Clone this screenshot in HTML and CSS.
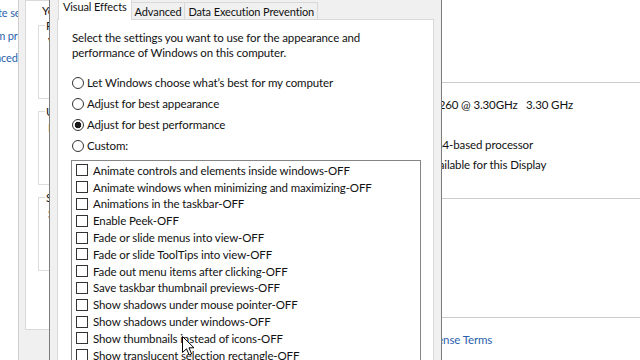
FILE: index.html
```html
<!DOCTYPE html>
<html lang="en">
<head>
  <meta charset="UTF-8" />
  <meta name="viewport" content="width=device-width, initial-scale=1.0"/>
  <title>Performance Options</title>
  <link rel="stylesheet" href="styles.css">
</head>
<body>
  <!-- Control Panel side links, mostly hidden behind the dialogs -->
  <div class="cp-nav">
    <div class="cp-links">
      <a>Remote settings</a>
      <a>System protection</a>
      <a>Advanced system settings</a>
    </div>
  </div>

  <!-- System Properties, Advanced tab (behind) -->
  <div class="sysprops">
    <div class="sys-page">
      <p class="sys-note">You must be logged on as an Administrator to make most of these changes.</p>
      <fieldset class="sys-group">
        <legend>Performance</legend>
        <p>Visual effects, processor scheduling, memory usage, and virtual memory</p>
      </fieldset>
      <fieldset class="sys-group">
        <legend>User Profiles</legend>
        <p>Desktop settings related to your sign-in</p>
      </fieldset>
      <fieldset class="sys-group">
        <legend>Startup and Recovery</legend>
        <p>System startup, system failure, and debugging information</p>
      </fieldset>
    </div>
  </div>

  <!-- Performance Options dialog -->
  <div class="perf">
    <div class="tabs">
      <div class="tab active">Visual Effects</div>
      <div class="tab">Advanced</div>
      <div class="tab">Data Execution Prevention</div>
    </div>
    <div class="tab-page">
      <p class="intro">Select the settings you want to use for the appearance and<br>performance of Windows on this computer.</p>
      <div class="radios">
        <label class="radio"><span class="dot"></span>Let Windows choose what’s best for my computer</label>
        <label class="radio"><span class="dot"></span>Adjust for best appearance</label>
        <label class="radio"><span class="dot checked"></span>Adjust for best performance</label>
        <label class="radio"><span class="dot"></span>Custom:</label>
      </div>
      <ul class="effects">
        <li><span class="box"></span>Animate controls and elements inside windows-OFF</li>
        <li><span class="box"></span>Animate windows when minimizing and maximizing-OFF</li>
        <li><span class="box"></span>Animations in the taskbar-OFF</li>
        <li><span class="box"></span>Enable Peek-OFF</li>
        <li><span class="box"></span>Fade or slide menus into view-OFF</li>
        <li><span class="box"></span>Fade or slide ToolTips into view-OFF</li>
        <li><span class="box"></span>Fade out menu items after clicking-OFF</li>
        <li><span class="box"></span>Save taskbar thumbnail previews-OFF</li>
        <li><span class="box"></span>Show shadows under mouse pointer-OFF</li>
        <li><span class="box"></span>Show shadows under windows-OFF</li>
        <li><span class="box"></span>Show thumbnails instead of icons-OFF</li>
        <li><span class="box"></span>Show translucent selection rectangle-OFF</li>
      </ul>
    </div>
  </div>

  <!-- Control Panel > System (behind, right side) -->
  <div class="cp-main">
    <div class="cp-section basic">
      <div class="cp-values">
        <div class="cp-row">Intel(R) Pentium(R) CPU G3260 @ 3.30GHz&nbsp;&nbsp; 3.30 GHz</div>
        <div class="cp-row">4.00 GB</div>
        <div class="cp-row">64-bit Operating System, x64-based processor</div>
        <div class="cp-row">No Pen or Touch Input is available for this Display</div>
      </div>
    </div>
    <div class="cp-section names"></div>
    <div class="cp-section activation">
      <div class="cp-activation">
        <span>Windows is activated</span>
        <a>Read the Microsoft Software License Terms</a>
      </div>
    </div>
  </div>

  <svg class="cursor" width="14" height="21" viewBox="0 0 14 21">
    <path d="M0.5 0.5 L0.5 16.5 L4.5 12.8 L7.2 19 L9.6 18 L7 11.8 L12 11.8 Z" fill="#fff" stroke="#000" stroke-width="1" stroke-linejoin="round"/>
  </svg>
</body>
</html>
```

FILE: styles.css
```css
* {
  box-sizing: border-box;
}
body {
  margin: 0;
  width: 640px;
  height: 360px;
  overflow: hidden;
  position: relative;
  display: flex;
  font-family: Lato, "Noto Sans", sans-serif;
  font-size: 11.5px;
  letter-spacing: -0.12px;
  color: #111;
  background: #fff;
}
a {
  color: #2a62ad;
}

/* control panel nav */
.cp-nav {
  width: 19px;
  flex: none;
  overflow: hidden;
  background: #fff;
  border-right: 1px solid #cfcfcf;
}
.cp-links {
  margin-left: -29px;
  padding-top: 2px;
  display: flex;
  flex-direction: column;
  white-space: nowrap;
  font-size: 11px;
  line-height: 22.5px;
}

/* system properties */
.sysprops {
  width: 30px;
  flex: none;
  overflow: hidden;
  background: #f0f0f0;
  padding-left: 6px;
}
.sys-page {
  width: 400px;
  height: 330px;
  background: #fff;
  border: 1px solid #d9d9d9;
  padding: 2px 0 0 12px;
  white-space: nowrap;
}
.sys-note {
  margin: 0 0 0 4px;
  line-height: 15px;
}
.sys-group {
  margin: 0 0 5px;
  height: 81px;
  border: 1px solid #dcdcdc;
  padding: 0 0 0 7px;
}
.sys-group legend {
  padding: 0 1px;
  margin-left: -1px;
  line-height: 15px;
}
.sys-group p {
  margin: 2px 0 0 2px;
}

/* performance options dialog */
.perf {
  width: 393px;
  flex: none;
  background: #f0f0f0;
  border-left: 1px solid #7c7c7c;
  border-right: 1px solid #7c7c7c;
  padding: 0 7px;
}
.tabs {
  height: 19px;
  display: flex;
  align-items: flex-end;
  padding-left: 2px;
  font-size: 11px;
}
.tab {
  height: 17px;
  padding: 2px 3px 0;
  border: 1px solid #d9d9d9;
  border-bottom: none;
  margin-left: -1px;
  background: #f0f0f0;
  white-space: nowrap;
}
.tab.active {
  height: 20px;
  padding: 0 4px;
  margin-bottom: -1px;
  background: #fff;
  position: relative;
  z-index: 1;
  border-top: none;
}
.tab-page {
  height: 400px;
  background: #fff;
  border: 1px solid #d9d9d9;
  padding: 10px 12px 0 14px;
}
.intro {
  margin: 0;
  line-height: 15px;
}
.radios {
  margin-top: 12px;
}
.radio {
  height: 21px;
  display: flex;
  align-items: center;
  gap: 3px;
}
.dot {
  width: 12px;
  height: 12px;
  border: 1px solid #333;
  border-radius: 50%;
  background: #fff;
}
.dot.checked {
  background: radial-gradient(circle, #1a1a1a 0 3px, #fff 3.6px);
}
.effects {
  list-style: none;
  margin: 4px 0 0 -1px;
  padding: 1px 0 0 4px;
  width: 350px;
  height: 220px;
  border: 1px solid #858585;
}
.effects li {
  height: 16.8px;
  display: flex;
  align-items: center;
  gap: 5px;
  white-space: nowrap;
}
.box {
  width: 12px;
  height: 12px;
  border: 1px solid #333;
  background: #fff;
  flex: none;
}

/* control panel system page */
.cp-main {
  flex: 1;
  overflow: hidden;
  background: #fff;
  white-space: nowrap;
}
.cp-section {
  border-top: 1px solid #cccccc;
  padding-top: 12px;
}
.cp-section.basic {
  margin-top: 82px;
  height: 116px;
}
.cp-section.names {
  height: 119px;
}
.cp-values {
  margin-left: -138px;
}
.cp-row {
  height: 20px;
  line-height: 20px;
}
.cp-activation {
  margin-left: -283px;
  line-height: 20px;
}
.cp-activation span {
  margin-right: 12px;
}

.cursor {
  position: absolute;
  left: 182px;
  top: 336px;
}
```
